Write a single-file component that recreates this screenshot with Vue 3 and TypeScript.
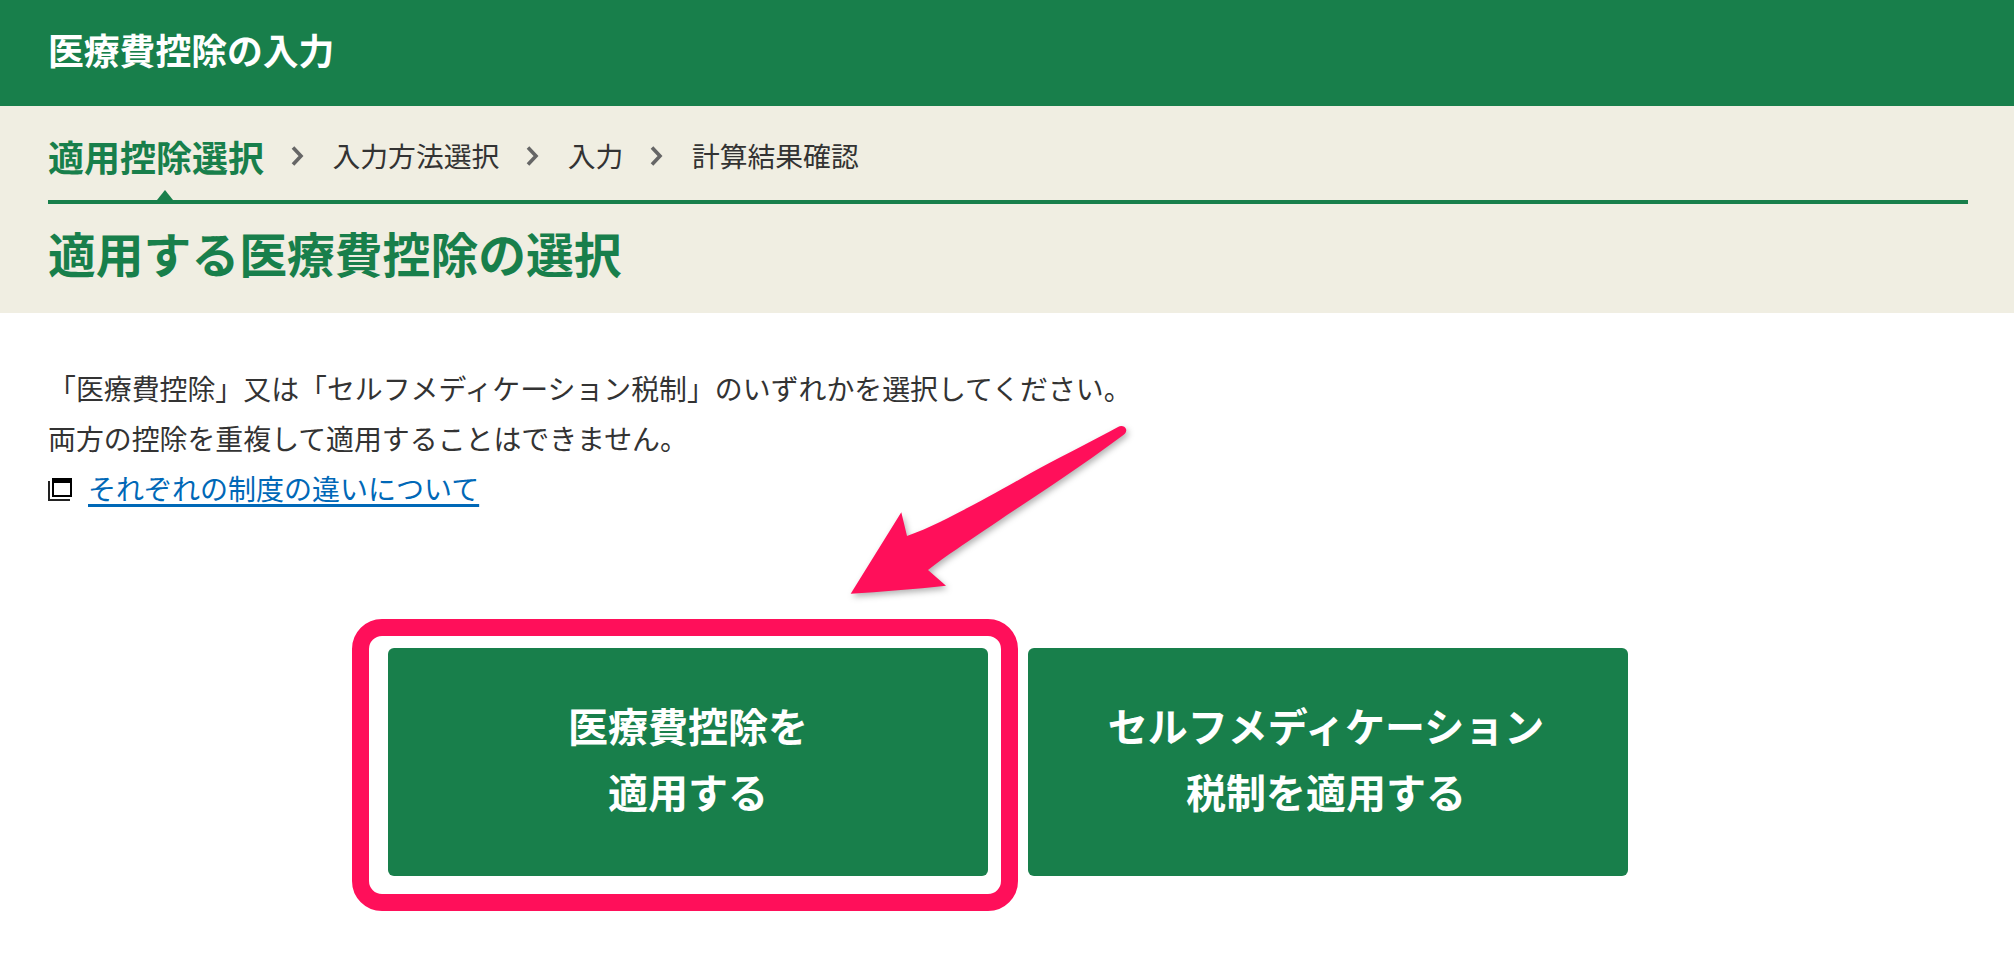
<script setup lang="ts">
const steps: string[] = ['入力方法選択', '入力', '計算結果確認']
</script>

<template>
  <div class="page">
    <header class="top">医療費控除の入力</header>
    <section class="band">
      <nav class="steps">
        <span class="step active">適用控除選択</span>
        <template v-for="s in steps" :key="s">
          <svg class="chev" viewBox="0 0 14 22" width="14" height="22" aria-hidden="true">
            <path d="M3 2.5 L11 11 L3 19.5" fill="none" stroke="#666" stroke-width="3.6" />
          </svg>
          <span class="step">{{ s }}</span>
        </template>
      </nav>
      <h1 class="heading">適用する医療費控除の選択</h1>
    </section>
    <main class="body">
      <p class="line">「医療費控除」又は「セルフメディケーション税制」のいずれかを選択してください。</p>
      <p class="line">両方の控除を重複して適用することはできません。</p>
      <p class="line linkline">
        <svg class="winicon" viewBox="0 0 24 23" width="24" height="23" aria-hidden="true">
          <path d="M1 3 V22 H22" fill="none" stroke="#222" stroke-width="2" />
          <rect x="5" y="1" width="18" height="17" fill="#fff" stroke="#000" stroke-width="2" />
          <rect x="4" y="0" width="20" height="5" fill="#000" />
        </svg>
        <a class="link" href="#">それぞれの制度の違いについて</a>
      </p>
      <div class="actions">
        <button class="btn" type="button">
          医療費控除を<br />適用する
          <span class="ring"></span>
        </button>
        <button class="btn btn-second" type="button">セルフメディケーション<br />税制を適用する</button>
      </div>
    </main>
    <svg class="arrow" viewBox="0 0 300 190" width="300" height="190" aria-hidden="true">
      <path
        d="M278 7 C281 5 285 6 286 9 C287 12 285 14 282 16 C240 47 205 70 167 95 C145 110 130 120 117 129 C106 136 97 143 88 150 L106 165.7 C75 169 40 172 10.7 173.7 L61.3 92.3 L67 116 C90 108 110 97 133 85 C160 71 180 59 200 48 C228 33 252 21 278 7 Z"
        fill="#ff0f5a"
      />
    </svg>
  </div>
</template>

<style>
html, body { margin: 0; background: #fff; }
</style>

<style scoped>
.page {
  position: relative;
  width: 2014px;
  height: 964px;
  overflow: hidden;
  font-family: "Noto Sans CJK JP", "Liberation Sans", sans-serif;
  color: #333;
  background: #fff;
}
.top {
  height: 106px;
  box-sizing: border-box;
  padding: 0 48px 8px;
  display: flex;
  align-items: center;
  background: #187f4b;
  color: #fff;
  font-size: 35.8px;
  font-weight: 700;
}
.band {
  height: 207px;
  box-sizing: border-box;
  padding: 0 46px 0 48px;
  background: #f0eee2;
}
.steps {
  position: relative;
  height: 98px;
  box-sizing: border-box;
  padding-top: 6px;
  display: flex;
  align-items: center;
  gap: 27.5px;
  border-bottom: 4px solid #187f4b;
}
.step {
  font-size: 27.8px;
  line-height: 1;
  color: #333;
}
.step.active {
  font-size: 36px;
  font-weight: 700;
  color: #187f4b;
}
.step.active::after {
  content: "";
  position: absolute;
  left: 109px;
  bottom: 0;
  border-left: 8px solid transparent;
  border-right: 8px solid transparent;
  border-bottom: 10px solid #187f4b;
}
.chev {
  flex: none;
  margin: 0 1.5px 0 -2px;
}
.heading {
  margin: 0;
  height: 105px;
  box-sizing: border-box;
  padding-bottom: 8px;
  display: flex;
  align-items: center;
  font-size: 47.8px;
  font-weight: 700;
  color: #187f4b;
}
.body { padding: 50px 48px 0; }
.line {
  margin: 0;
  height: 50px;
  line-height: 50px;
  font-size: 27.9px;
}
.linkline {
  display: flex;
  align-items: center;
  gap: 16px;
}
.winicon {
  flex: none;
  margin-top: 3px;
}
.link {
  color: #0068b7;
  font-size: 28px;
  text-decoration: underline;
  text-decoration-thickness: 2.5px;
  text-underline-offset: 4px;
}
.actions {
  margin: 135px -50px 0 -48px;
  display: flex;
  justify-content: center;
  gap: 40px;
}
.btn {
  position: relative;
  width: 600px;
  height: 228px;
  padding: 0 0 8px;
  border: 0;
  border-radius: 6px;
  background: #187f4b;
  color: #fff;
  font: 700 40px/66px "Noto Sans CJK JP", "Liberation Sans", sans-serif;
}
.btn-second { padding-right: 4px; }
.ring {
  position: absolute;
  left: -36px;
  right: -30px;
  top: -29px;
  bottom: -35px;
  border: 17px solid #ff0f5a;
  border-radius: 30px;
  pointer-events: none;
}
.arrow {
  position: absolute;
  left: 840px;
  top: 420px;
  filter: drop-shadow(2px 3px 3px rgba(0, 0, 0, 0.3));
}
</style>
